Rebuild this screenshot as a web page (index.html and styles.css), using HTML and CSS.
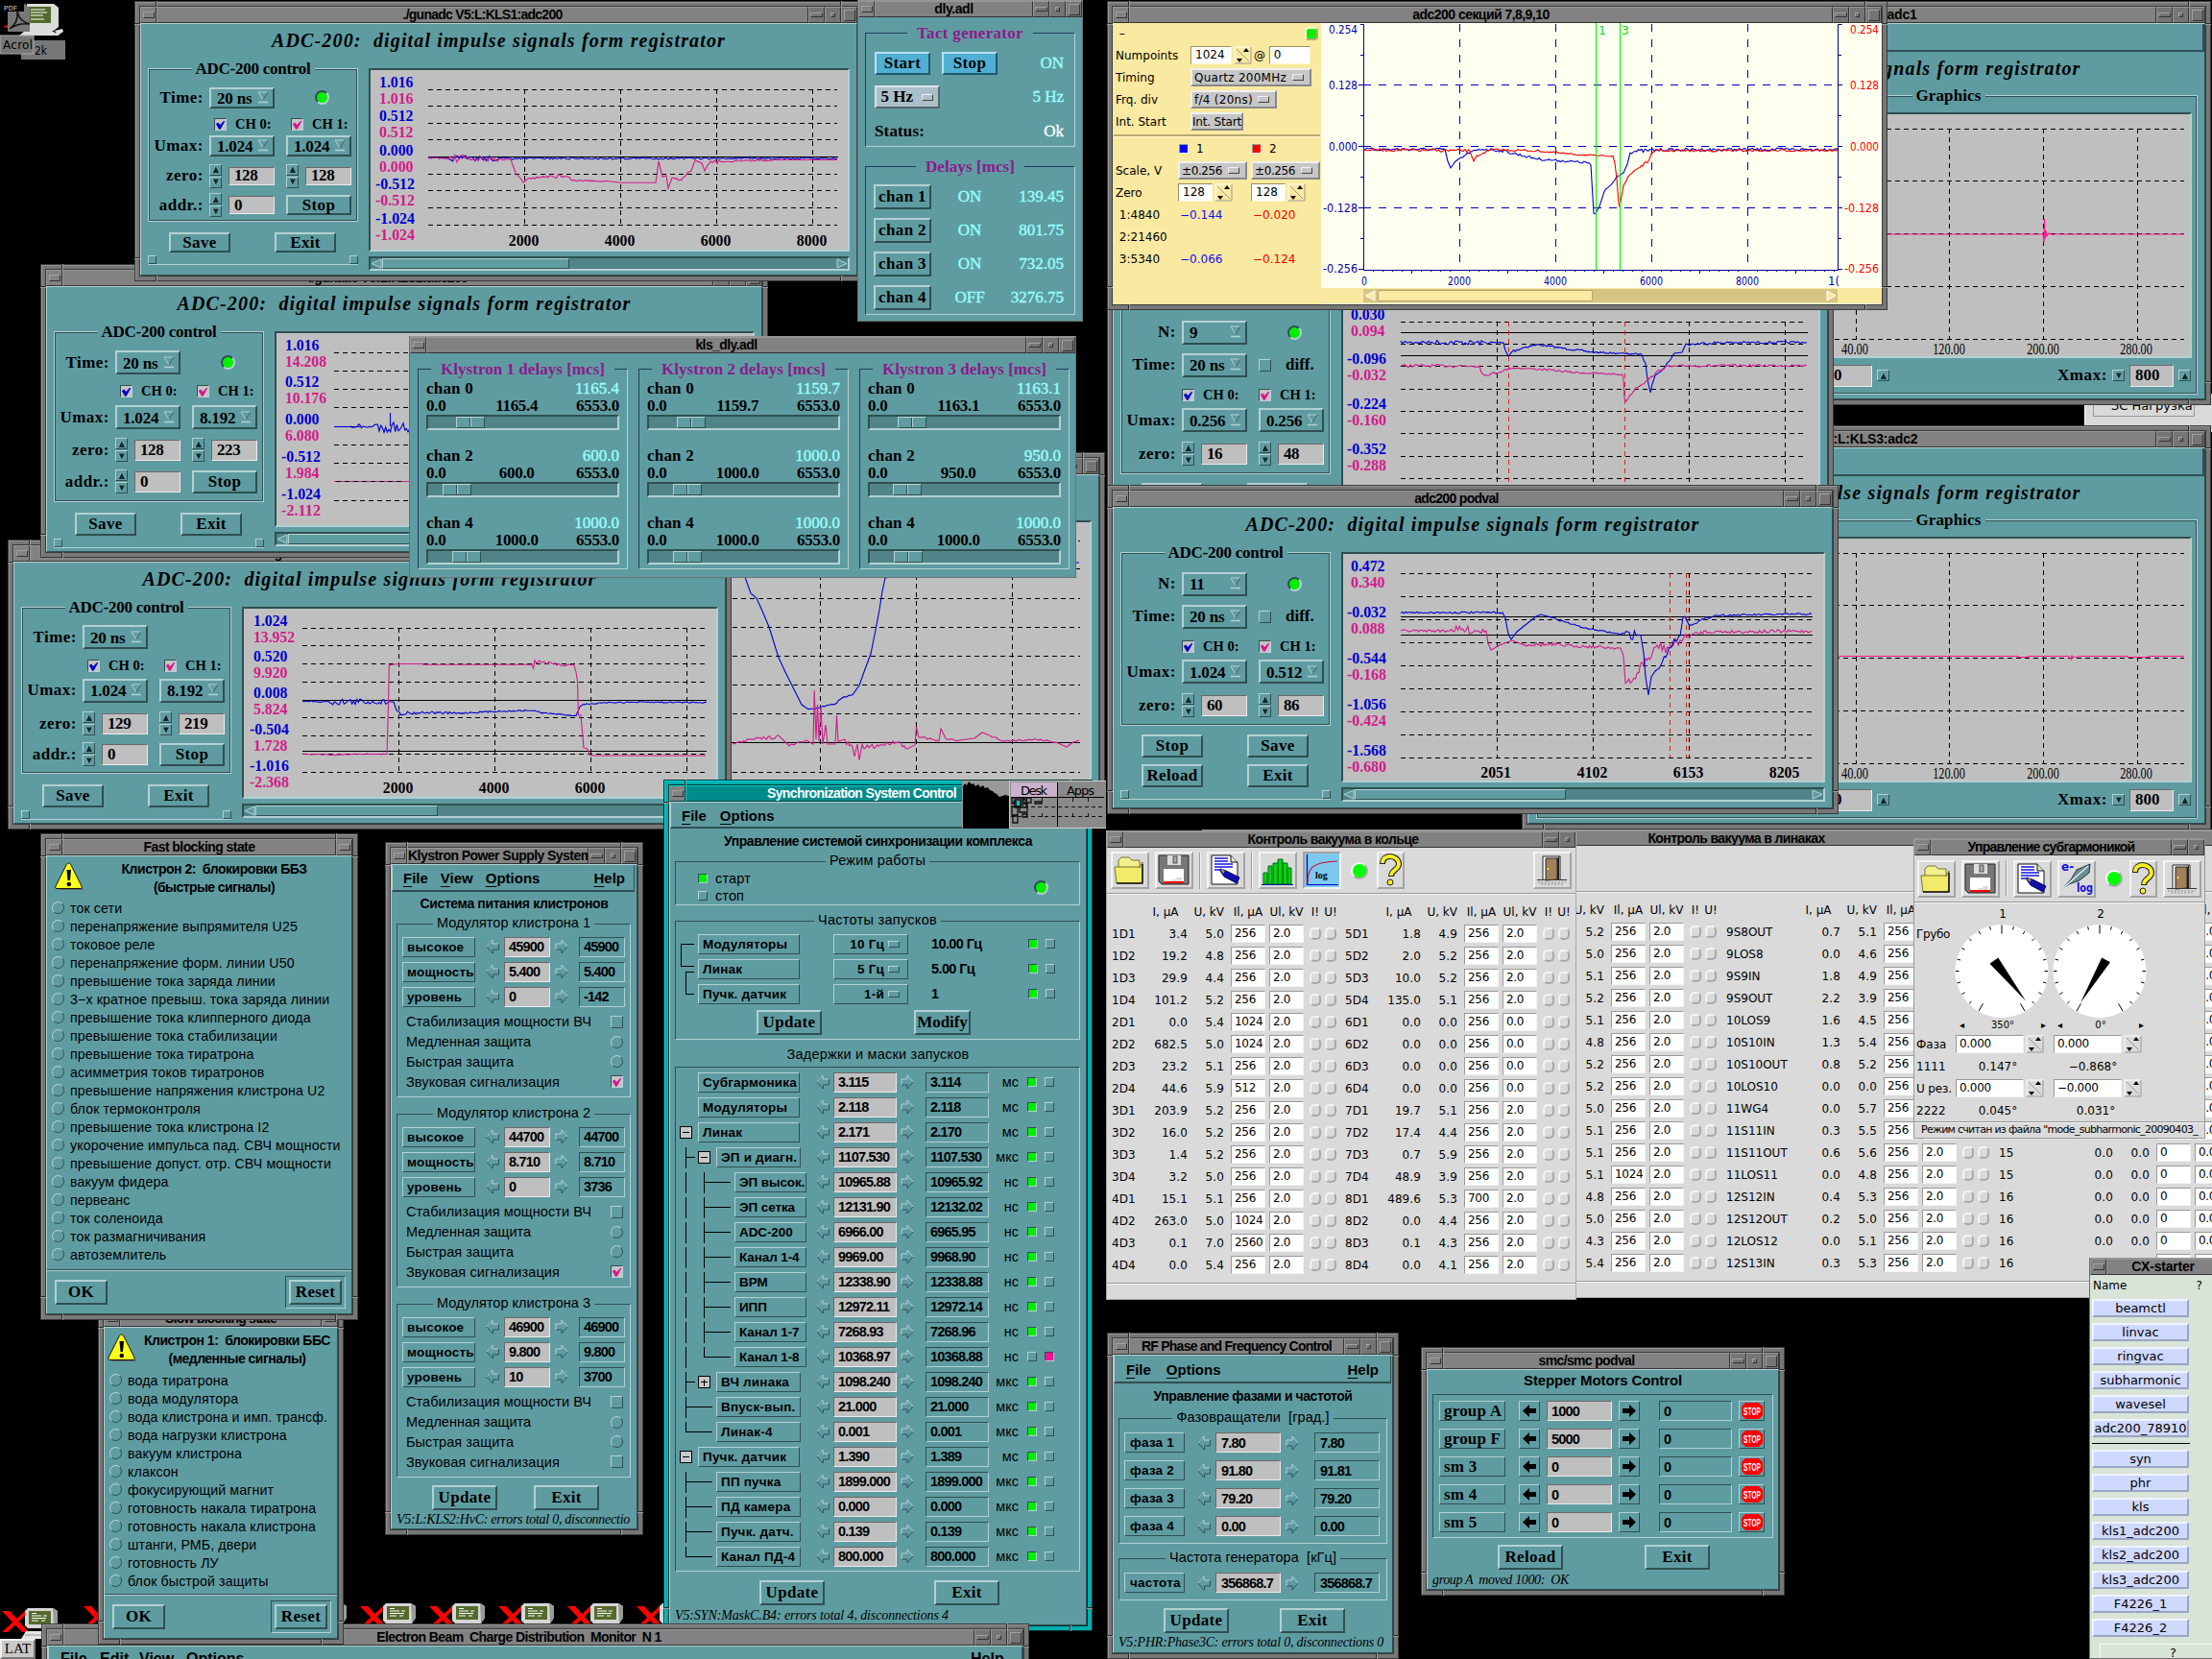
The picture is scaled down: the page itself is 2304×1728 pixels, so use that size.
FILE: index.html
```html
<!DOCTYPE html>
<html lang="ru">
<head>
<meta charset="utf-8">
<title>Control desktop</title>
<link rel="stylesheet" href="styles.css">
</head>
<body>
<svg class="defs" aria-hidden="true">
  <symbol id="i-folder" viewBox="0 0 40 40"><path d="M8 17V9l3-3h8l3 3h8v8" fill="#f2f08c" stroke="#77752a"/><path d="M4 16h25l1 1 3-6v20l-3 2H6z" fill="#f0ec6a" stroke="#77752a"/><path d="M6 33h27V13" fill="none" stroke="#111" stroke-width="1.5"/></symbol>
  <symbol id="i-floppy" viewBox="0 0 40 40"><path d="M4 4h31v30H7l-3-3z" fill="#777" stroke="#222"/><rect x="13" y="4" width="14" height="10" fill="#ddd"/><rect x="19" y="5" width="4" height="7" fill="#aaa" stroke="#333" stroke-width=".8"/><rect x="9" y="18" width="21" height="13" fill="#fff"/><rect x="9" y="31" width="21" height="2" fill="#f00"/><path d="M22 28h6M17 30h11" stroke="#bbb"/></symbol>
  <symbol id="i-doc" viewBox="0 0 40 40"><path d="M5 4h20l7 7v23H5z" fill="#fff" stroke="#111"/><path d="M25 4v7h7" fill="#ddd" stroke="#111"/><path d="M8 7h14M8 10h14M8 13h19M8 16h19M8 19h8" stroke="#1414e0" stroke-width="1.4"/><path d="M14 18l6 2 14 7-3 6-13-7-4-6z" fill="#1010a8" stroke="#000060"/><path d="M14 18l5 2-2 3z" fill="#a99550"/></symbol>
  <symbol id="i-bars" viewBox="0 0 40 40"><path d="M5 34V22h4v12zM10 34V15h4v19zM15 34V12h5v22zM20 34V8h5v26zM25 34V12h5v22zM30 34V17h4v17z" fill="#00d800" stroke="#063" stroke-width="1"/><path d="M3 34.5h33" stroke="#002090"/></symbol>
  <symbol id="i-log" viewBox="0 0 40 40"><path d="M4.500 3v31.500h32" fill="none" stroke="#0000c8" stroke-width="1.200"/><path d="M5 33c0-16 4-22 31-23" fill="none" stroke="#d01030" stroke-width="1.200"/><text x="13" y="28" class="logtxt">log</text></symbol>
  <symbol id="i-help" viewBox="0 0 29 40"><path d="M6 13c0-6 4-8 8-8s9 3 9 8c0 6-8 6-8 13" fill="none" stroke="#222" stroke-width="6"/><path d="M6 12c0-5 4-7 8-7s9 3 9 8c0 6-8 6-8 12" fill="none" stroke="#f6f022" stroke-width="3.800"/><circle cx="14" cy="32" r="3" fill="#f6f022" stroke="#222"/></symbol>
  <symbol id="i-door" viewBox="0 0 40 40"><path d="M10 29V5h18v24" fill="#fff" stroke="#222"/><path d="M13 30V7h12v22z" fill="#a1815b" stroke="#222"/><path d="M25 7l2-2v25h-2z" fill="#222"/><circle cx="15.500" cy="18" r="1" fill="#ff0"/><path d="M4 29.500h31" stroke="#333"/><path d="M5 32h29M8 34h24" stroke="#888" stroke-dasharray="2 1.500"/></symbol>
  <symbol id="i-elog" viewBox="0 0 40 40"><path d="M5 30L14 20 20 10 34 4 33 13 23 21 12 25z" fill="#6d8f8f" stroke="#234"/><path d="M5 30L32 6" stroke="#def" stroke-width="1.300"/><text x="4" y="11" class="eltxt">e-</text><text x="20" y="33" class="eltxt" textLength="17" lengthAdjust="spacingAndGlyphs">log</text></symbol>
  <symbol id="i-left" viewBox="0 0 14 16"><path d="M7 1L1 8l6 7" fill="none" stroke="#2f5557"/><path d="M1 8l6-7v4h6" fill="none" stroke="#b3d1d3"/><path d="M13.500 5v6H7.500v4" fill="none" stroke="#2f5557"/></symbol>
  <symbol id="i-right" viewBox="0 0 14 16"><path d="M13 8l-6 7v-4H1" fill="none" stroke="#2f5557"/><path d="M1 11V5h6V1l6 7" fill="none" stroke="#b3d1d3"/></symbol>
  <symbol id="i-tick" viewBox="0 0 13 13"><path d="M1 6l3-2 2 3 5-5 1 1-5 9-2 1z" fill="currentColor"/></symbol>
  <symbol id="i-warn" viewBox="0 0 31 30"><path d="M15.500 4L30 29H5z" fill="#5a6a6a"/><path d="M14.500 1c1 0 2 .6 2.500 2l11 22c.5 1.500 0 2.500-1 2.500H2c-1.500 0-1.500-1-1-2.500L12 3c.5-1.400 1.500-2 2.500-2z" fill="#ffff1c" stroke="#111"/><path d="M12.500 8h4.500l-1 11h-2.500z"/><circle cx="14.800" cy="23" r="2.300"/></symbol>
  <symbol id="i-stop" viewBox="0 0 22 17"><path d="M4 0h14l4 4v9l-4 4H4l-4-4V4z" fill="#f00"/><text x="2" y="12.500" textLength="18" lengthAdjust="spacingAndGlyphs" class="stoptxt">STOP</text></symbol>
  <symbol id="i-term" viewBox="0 0 60 36"><path d="M0 3l8 0L28 25H21zM24 3l5 0L6 25H0z" fill="#f00"/><path d="M27 0h26l5 3v12l-4 6H27l-3-3V3z" fill="#d5d5d5"/><path d="M53 0l5 3v12l-4 6z" fill="#999"/><rect x="28" y="3" width="23" height="14" fill="#54692c"/><path d="M31 5.500h5M31 8h10M43 8h4M31 10.500h15M31 13h7M41 13h4" stroke="#fff"/><path d="M25 24h28l6 8H20z" fill="#e4e4e4"/><path d="M24 28h30" stroke="#999"/></symbol>
</svg>
<main id="desktop" class="desktop"></main>
<script src="app.js"></script>
</body>
</html>
```
FILE: styles.css
```css
:root {
  --teal: #5f9ca2;
  --lt: #b3d1d3;
  --dk: #2f4f51;
  --trough: #518488;
  --gray: #bfbfbf;
  --serif: "Liberation Serif", serif;
  --sans: "Liberation Sans", sans-serif;
  --lucida: "DejaVu Sans", sans-serif;
}
* { box-sizing: border-box; }
body { margin: 0; background: #000; }
.defs { display: block; width: 0; height: 0; }
.desktop { position: relative; width: 2304px; height: 1728px; overflow: hidden; background: #000; color: #000; }
.t, .win { white-space: nowrap; }
.t { display: inline-block; white-space: pre; }

/* window frames */
.win { position: absolute; display: flex; flex-direction: column; font: bold 17px var(--serif); }
.framed { padding: 6px; background: #6e6e6e; box-shadow: inset 0 0 0 1px #3a3a3a, inset 2px 2px 0 #949494, inset 0 0 0 5px #777, inset 0 0 0 6px #3a3a3a; }
.framed::after { content: ""; position: absolute; inset: 0; pointer-events: none;
  --n: linear-gradient(90deg, #2c2c2c 50%, #9a9a9a 50%);
  --m: linear-gradient(#2c2c2c 50%, #9a9a9a 50%);
  background: var(--n) 22px 0/2px 6px no-repeat, var(--n) calc(100% - 22px) 0/2px 6px no-repeat, var(--n) 22px 100%/2px 6px no-repeat, var(--n) calc(100% - 22px) 100%/2px 6px no-repeat, var(--m) 0 23px/6px 2px no-repeat, var(--m) 100% 23px/6px 2px no-repeat, var(--m) 0 calc(100% - 23px)/6px 2px no-repeat, var(--m) 100% calc(100% - 23px)/6px 2px no-repeat; }
.bar { display: flex; height: 17px; flex: none; background: #333; }
.bar > * { border: 1px solid; border-color: #989898 #333 #333 #989898; background: #828282; }
.bar h2 { flex: 1; margin: 0; overflow: hidden; text-align: center; font: bold 14px/14px var(--sans); letter-spacing: -.2px; min-width: 0; }
.bar i { width: 17px; display: flex; align-items: center; justify-content: center; background: #757575; }
.bar i.menu { background: #828282; }
.bar i::before { content: ""; border: 1px solid; border-color: #a0a0a0 #333 #333 #a0a0a0; }
.bar i.menu::before { width: 10px; height: 5px; }
.bar i.min::before { width: 11px; height: 3px; }
.bar i.dot::before { width: 3px; height: 3px; }
.bar i.max::before { width: 10px; height: 10px; }
.active { background: #00a8a8; box-shadow: inset 0 0 0 1px #033, inset 2px 2px 0 #00d8d8, inset 0 0 0 5px #00aeae, inset 0 0 0 6px #033; }
.active .bar > * { background: #008b8b; border-color: #00d0d0 #044 #044 #00d0d0; color: #fff; }
.body { flex: 1; min-height: 0; background: var(--teal); border: 1px solid; border-color: var(--lt) var(--dk) var(--dk) var(--lt); overflow: hidden; display: flex; flex-direction: column; }
.flat .body { border: 0; }
.flat .bar { height: 18px; border-top: 1px solid #949494; }
.flat { border: 1px solid #6e6e6e; border-top: 0; }

/* shared widgets */
.group { display: flex; flex-direction: column; border: 1px solid; border-color: var(--dk) var(--lt) var(--lt) var(--dk); flex: none; }
.etched { border-color: var(--lt); box-shadow: inset 1px 1px 0 var(--dk), inset -1px -1px 0 var(--dk); }
.legend { align-self: center; height: 20px; line-height: 20px; margin: -10px 0 0; padding: 0 4px; background: var(--teal); flex: none; }
.btn { display: flex; align-items: center; justify-content: center; flex: none; border: 2px solid; border-color: var(--lt) var(--dk) var(--dk) var(--lt); background: var(--teal); letter-spacing: .35px; }
.inp { display: flex; align-items: center; flex: none; background: var(--gray); border: 1px solid; border-color: #6f6666 #f0eaea #f0eaea #6f6666; overflow: hidden; }
.out { display: flex; align-items: center; flex: none; border: 1px solid; border-color: var(--dk) var(--lt) var(--lt) var(--dk); }
.tag { display: flex; align-items: center; flex: none; border: 1px solid; border-color: var(--lt) var(--dk) var(--dk) var(--lt); }
.led { width: 15px; height: 15px; border-radius: 50%; background: #00f000; border: 2px solid; border-color: var(--dk) var(--lt) var(--lt) var(--dk); flex: none; }
.chk { width: 13px; height: 13px; flex: none; border: 1px solid; border-color: var(--dk) var(--lt) var(--lt) var(--dk); background: #c8c4c8; color: #0000c8; display: block; }
.chk svg { display: block; width: 11px; height: 11px; }
.chk.off { background: none; border-color: var(--lt) var(--dk) var(--dk) var(--lt); }
.chk.pink { color: #d01c8b; }
.ring { width: 13px; height: 13px; flex: none; border-radius: 50%; border: 1px solid; border-color: var(--lt) var(--dk) var(--dk) var(--lt); }
.sq { width: 10px; height: 10px; flex: none; border: 1px solid; border-color: var(--dk) var(--lt) var(--lt) var(--dk); background: #00ee00; }
.sq.off { background: none; border-color: var(--lt) var(--dk) var(--dk) var(--lt); }
.sq.hot { background: #f01490; border-color: var(--dk) var(--lt) var(--lt) var(--dk); }
.ar { width: 14px; height: 16px; flex: none; display: block; }
.menubar { display: flex; flex: none; align-items: center; font: bold 15px var(--sans); border: 1px solid; border-color: transparent var(--dk) var(--dk) var(--lt); border-bottom-width: 2px; }
.menubar u { text-underline-offset: 3px; text-decoration-thickness: 1px; }
.menubar .end { margin-left: auto; }
.status { font: italic 14px/20px var(--serif); flex: none; white-space: nowrap; overflow: hidden; }
.head { text-align: center; font: bold 14px var(--sans); flex: none; }
.sans { font: 14.500px var(--sans); }
.cond { font: bold 14.500px var(--sans); letter-spacing: -.8px; }
.nub { width: 12px; height: 7px; border: 1px solid; border-color: #eef #444 #444 #eef; }

/* ADC windows */
.adc .body { padding: 0 7px 0 7px; }
.adc h1 { margin: 0; height: 46px; font: italic bold 20px/35px var(--serif); text-align: center; flex: none; }
.adc-main { display: grid; grid-template-columns: 219px 1fr; column-gap: 11px; }
.ctl { height: var(--box); }
.ctl-grid { display: grid; grid-template-columns: 57px 68px 68px; column-gap: 0; align-items: center; }
.ctl-grid > .l { text-align: right; letter-spacing: .5px; }
.ctl-grid > .c1 { margin-left: 6px; width: 68px; }
.ctl-grid > .c2 { margin-left: 18px; width: 68px; }
.sel { display: flex; align-items: center; height: var(--h); border: 2px solid; border-color: var(--lt) var(--dk) var(--dk) var(--lt); padding: 2px 4px 0 6px; letter-spacing: -.2px; }
.sel svg { width: 12px; height: 15px; margin-left: auto; margin-top: -3px; }
.spin { display: flex; justify-content: space-between; align-items: center; }
.spin .inp { width: 48px; height: calc(var(--h) - 3px); padding-left: 5px; letter-spacing: -.4px; }
.ud { display: flex; flex-direction: column; gap: 1px; }
.ab { width: 13px; height: 12px; border: 1px solid; border-color: var(--lt) var(--dk) var(--dk) var(--lt); display: flex; align-items: center; justify-content: center; flex: none; }
.ab svg { width: 7px; height: 7px; display: block; }
.ck { display: flex; align-items: center; gap: 9px; padding-left: var(--ci, 5px); font-size: 14.500px; }
.ck.lamped { padding-left: 30px; }
.ck.diff { padding-left: 0; gap: 15px; font-size: 17px; }
.ctl-grid .btn { height: calc(var(--h) - 1px); }
.acts { display: grid; grid-template-columns: 64px 64px; column-gap: 46px; row-gap: 7px; padding-left: 22px; margin-top: var(--ag, 11px); }
.acts .btn { height: calc(var(--h) - 1px); }
.sash { margin-top: 2px; display: flex; justify-content: space-between; align-items: flex-end; height: 11px; border-bottom: 1px solid var(--lt); }
.sash i { width: 9px; height: 9px; border: 1px solid; border-color: var(--lt) var(--dk) var(--dk) var(--lt); }
.panel { border: 2px solid; border-color: var(--dk) var(--lt) var(--lt) var(--dk); background: var(--gray); overflow: hidden; }
.plot { display: block; }
.sb { height: 15px; margin-top: 5px; display: flex; background: var(--trough); border: 2px solid; border-color: var(--dk) var(--lt) var(--lt) var(--dk); }
.sb svg { width: 12px; height: 11px; flex: none; }
.sb b { border: 1px solid; border-color: var(--lt) var(--dk) var(--dk) var(--lt); background: var(--teal); }
.sb svg:last-child { margin-left: auto; }

/* charts */
.g { stroke: #000; stroke-width: 1; stroke-dasharray: 5 4; shape-rendering: crispEdges; }
.s { stroke: #000; shape-rendering: crispEdges; }
.r { stroke: #e02020; stroke-dasharray: 5 4; shape-rendering: crispEdges; }
.tb, .tp, .th, .td { fill: none; stroke-width: 1.100; }
.tb { stroke: #0000cd; } .tp { stroke: #d01c8b; } .th { stroke: #ff1493; } .td { stroke: #f00000; }
.lb, .lp, .lk { font: bold 17px var(--serif); }
.lb { fill: #0000cd; } .lp { fill: #d01c8b; }
.lt { font: 16px var(--serif); }

.win.a { left: 140px; top: 1px; width: 759px; height: 292px; --h: 22px; --box: 160px; }
.a .ctl-grid { grid-template-rows: 39px 16px 30px 32px 29px; }
.win.b { left: 42px; top: 275px; width: 758px; height: 306px; --h: 25px; --box: 178px; }
.b .ctl-grid { grid-template-rows: 43px 17px 37px 31px 35px; }
.win.c { left: 8px; top: 562px; width: 754px; height: 302px; --h: 25px; --box: 174px; }
.c .ctl-grid { grid-template-rows: 41px 19px 32px 37px 27px; }
.win.h, .win.i { --h: 25px; --box: 181px; --ci: 0px; --ag: 9px; }
.h .ctl-grid, .i .ctl-grid { grid-template-rows: 44px 24px 39px 13px 57px; }
.win.h { left: 1153px; top: 243px; width: 757px; height: 344px; }
.win.i { left: 1153px; top: 505px; width: 762px; height: 343px; }
.win.d { left: 394px; top: 471px; width: 757px; height: 392px; }
.d .panel { margin: 47px 7px 0; }

/* graphics windows on the right */
.gw .strip { height: 29px; border-bottom: 2px solid var(--dk); border-right: 2px solid var(--dk); margin-bottom: 1px; flex: none; }
.gw h1 { margin: 0; font: italic bold 20px/33px var(--serif); text-align: center; padding-right: 26px; height: 44px; flex: none; }
.gw .group { margin: 0 7px 0 8px; height: 312px; padding: 0 5px 0 7px; }
.gw .legend { margin-left: 168px; }
.gw .panel { margin-top: 7px; }
.gw .foot { display: flex; align-items: center; height: 36px; gap: 5px; padding-right: 1px; }
.gw .foot .inp { height: 23px; width: 46px; padding-left: 5px; }
.gw .foot .xm { margin-left: 170px; letter-spacing: .6px; }
.gw .foot .n0 { margin-left: auto; }
.win.j { left: 1585px; top: 1px; width: 718px; height: 421px; }
.win.k { left: 1585px; top: 443px; width: 718px; height: 421px; }
.load { position: absolute; left: 2171px; top: 410px; width: 140px; height: 40px; background: #d9d9d9; padding: 7px 0 0 8px; border-left: 1px solid #fff; }
.load div { width: 106px; height: 17px; border: 1px solid #999; font: 13px/9px var(--lucida); padding-left: 18px; white-space: nowrap; }

/* delays panels */
.win.e { left: 426px; top: 350px; width: 695px; height: 252px; }
.e .body { flex-direction: row; gap: 11px; padding: 16px 7px 8px 8px; }
.e .group, .f .group { border-color: #1d3c5c var(--lt) var(--lt) #1d3c5c; }
.e .group { width: 219px; padding: 0 8px; }
.e .legend, .f .legend { color: #8b1a8b; padding: 0 10px; font-size: 17px; }
.cyan { color: #98ffff; font-weight: normal; -webkit-text-stroke: .35px #98ffff; letter-spacing: 0; }
.e .dl { height: 70px; letter-spacing: -.3px; flex: none; }
.e .dl p { margin: 0; height: 18px; line-height: 21px; display: flex; justify-content: space-between; }
.e .dl p:first-child { letter-spacing: .2px; height: 17px; line-height: 20px; }
.e .dl p span:nth-child(2) { padding-left: 12px; }
.slide { height: 16px; margin-top: 2px; border: 2px solid; border-color: var(--dk) var(--lt) var(--lt) var(--dk); background: var(--trough); }
.slide b { display: block; width: 30px; height: 12px; border: 1px solid; border-color: var(--lt) var(--dk) var(--dk) var(--lt); background: linear-gradient(90deg, transparent 13px, var(--dk) 13px 14px, var(--lt) 14px 15px, transparent 15px) var(--teal); }
.win.f { left: 893px; top: 0; width: 235px; height: 335px; }
.f .body { padding: 16px 7px 7px; gap: 20px; }
.f .group { padding: 0 9px; }
.f .g1 { height: 119px; } .f .g2 { height: 155px; }
.f .rw { display: flex; align-items: center; height: 35px; padding: 0 2px 0 0; flex: none; position: relative; top: 3px; }
.f .g1 .rw { height: 35.500px; }
.f .btn.sky { width: 58px; height: 24px; background: #4fb0d4; border-color: #b8e0f0 #205a70 #205a70 #b8e0f0; margin-right: 12px; }
.f .hz { width: 68px; height: 24px; border: 2px solid; border-color: #d8e4e8 #55666b #55666b #d8e4e8; background: #aabfc8; display: flex; align-items: center; justify-content: space-around; }
.f .right { margin-left: auto; }
.f .cb { width: 60px; height: 26px; margin-left: -1px; }
.f .st { width: 64px; text-align: center; margin-left: 8px; }
.white { color: #fff; font-weight: normal; -webkit-text-stroke: .35px #fff; }

/* yellow scope window */
.win.y { left: 1153px; top: 1px; width: 813px; height: 322px; }
.y .body { background: #fae9a0; flex-direction: row; border: 0; font: 12px var(--lucida); }
.yl { width: 217px; flex: none; }
.yl .rw { height: 23px; display: flex; align-items: center; padding-left: 3px; }
.yl .first { justify-content: space-between; padding-right: 3px; height: 22px; }
.yl .led { width: 14px; height: 14px; border-radius: 4px; border-color: #fff6cf #b5a870 #b5a870 #fff6cf; }
.yl .nm { width: 78px; flex: none; }
.yl .k2 .nm { width: 65px; }
.yl .vl { width: 76px; flex: none; }
.yl .k2 .vl { display: flex; align-items: center; }
.yl .sq { margin: 0 8px 0 1px; border-color: #999 #fff #fff #999; }
.yl .sq.bl { background: #00f; } .yl .sq.rd { background: #f00; }
.yl .blue { color: #1010f0; padding-left: 2px; } .yl .red { color: #f00000; padding-left: 2px; }
.fi { background: #fff; border: 1px solid; border-color: #9a8f60 #fff6cf #fff6cf #9a8f60; height: 19px; line-height: 17px; padding-left: 4px; flex: none; }
.fi.w43 { width: 43px; } .fi.w36 { width: 36px; }
.op { background: #c6c6c6; border: 2px solid; border-color: #f0f0f0 #888 #888 #f0f0f0; height: 19px; display: flex; align-items: center; justify-content: space-between; padding: 0 6px 0 2px; flex: none; }
.op.o1 { width: 126px; } .op.o2 { width: 90px; } .op.o3 { width: 55px; padding: 0; } .op.o4 { width: 72px; margin-right: 4px; }
.sp { width: 19px; height: 19px; flex: none; margin: 0 2px; display: block; }
.yr { flex: 1; background: #fffff0; }
.yhr { height: 3px; background: #b5a870; border-bottom: 1px solid #fff6cf; margin: 2px 1px 0; }
.cy, .cr, .cg { font: 12px var(--lucida); }
.cy { fill: #0000a8; } .cr { fill: #f00; } .cg { fill: #0d0; }

/* klystron interlock lists */
.win.m { left: 42px; top: 868px; width: 331px; height: 507px; }
.win.n { left: 102px; top: 1359px; width: 256px; height: 354px; }
.blk .top { display: flex; height: 45px; flex: none; }
.blk .top svg { width: 31px; height: 30px; margin: 6px 0 0 8px; flex: none; }
.blk .top p { margin: 4px 0 0; flex: 1; text-align: center; font: bold 14px/18.500px var(--sans); }
.m .top p { margin-left: -8px; }
.m .top { height: 44px; }
.n .top svg { margin-left: 3px; }
.blk ul { margin: 0; padding: 0; list-style: none; }
.blk li { height: 19.020px; display: flex; align-items: center; gap: 6px; padding-left: 5px; font: 14.200px var(--sans); letter-spacing: .12px; }
.blk .bot { margin-top: auto; display: flex; justify-content: space-between; align-items: center; height: 46px; border-top: 1px solid var(--dk); box-shadow: inset 0 1px 0 var(--lt); padding: 0 6px 0 8px; }
.blk .btn { width: 55px; height: 26px; }
.rs { border: 1px solid; border-color: var(--dk) var(--lt) var(--lt) var(--dk); padding: 3px; }

/* klystron power supply */
.win.o { left: 401px; top: 877px; width: 269px; height: 722px; }
.o .menubar { height: 28px; gap: 13px; padding: 0 9px 0 11px; margin-right: 2px; }
.o .head { height: 33px; line-height: 24px; }
.o .group { margin: 0 6px 17px 5px; height: 181px; padding: 0 5px 0 5px; }
.o .gap { height: 3px; flex: none; }
.o .kr { height: 26px; display: grid; grid-template-columns: 76px 11px 14px 5px 48px 5px 14px 11px 48px; align-items: center; flex: none; }
.kr > * { height: 21px; }
.kr .ar { height: 16px; }
.tag, .cond { padding-left: 4px; }
.o .tag, .w .tag, .p .tag { font: bold 13.500px var(--sans); letter-spacing: .2px; }
.o .line { height: 20.800px; display: flex; justify-content: space-between; align-items: center; padding: 0 2px 0 4px; flex: none; }
.pair { display: flex; flex: none; }
.pair .btn { width: 68px; height: 26px; }
.o .pair { gap: 38px; padding-left: 42px; margin-top: -9px; }
.o .status { padding-left: 5px; margin-right: 7px; }

/* synchronization */
.win.p { left: 691px; top: 812px; width: 447px; height: 887px; }
.p .menubar { height: 27px; gap: 14px; padding: 0 11px; margin-right: 3px; }
.p .head { height: 26px; line-height: 26px; }
.p .group { margin: 0 6px 0 5px; width: 422px; }
.p .g1 { height: 46px; margin-top: 8px; }
.p .radio { display: flex; padding: 0 32px 0 23px; align-items: center; justify-content: space-between; margin-top: -2px; }
.p .radio p { margin: 0; height: 18px; display: flex; align-items: center; gap: 8px; }
.p .g2 { height: 124px; margin-top: 16px; }
.p .g2 .inner { display: grid; grid-template-columns: 23px 1fr; }
.p .fr { height: 26px; display: grid; grid-template-columns: 106px 35px 78px 24px 101px 18px 10px; align-items: center; }
.p .fr > .tag { height: 21px; }
.p .fr .fo { justify-content: flex-end; gap: 4px; padding-right: 8px; }
.p .fr .cond { padding: 0; letter-spacing: -.6px; }
.nub.tl { border-color: var(--lt) var(--dk) var(--dk) var(--lt); }
.p .g2 .pair { padding-left: 84px; gap: 96px; margin-top: 4px; }
.p .g2 .btn + .btn { width: 59px; letter-spacing: -.1px; }
.p .mid { height: 28px; line-height: 30px; text-align: center; flex: none; }
.p .g3 { height: 526px; display: grid; grid-template-columns: 23px 1fr; padding-top: 2px; align-content: start; }
.tree { overflow: visible; display: block; }
.tree path { stroke: #000; fill: none; shape-rendering: crispEdges; }
.tree rect { fill: #c8c8c8; stroke: #000; shape-rendering: crispEdges; }
.p .sr { height: 26px; display: grid; grid-template-columns: 123px 14px 4px 66px 4px 14px 12px 66px 31px 9px 18px 10px; align-items: center; }
.sr > .inp, .sr > .out, .sr > .tag { height: 21px; }
.sr .un { text-align: right; }
.sr .l0 { width: 106px; } .sr .l1 { width: 88px; margin-left: 19px; } .sr .l2 { width: 75px; margin-left: 38px; letter-spacing: -.1px; }
.p .ft { gap: 114px; padding-left: 93px; margin-top: 9px; }
.p .status { padding-left: 5px; margin-top: 1px; }

/* root menu pager */
.pg { position: absolute; left: 1002px; top: 813px; width: 150px; height: 50px; display: block; }
.pgt { font: 13px var(--lucida); }

/* vacuum tables */
.vac { background: #dadada; font: 12px var(--lucida); }
.vac .body { background: #dadada; }
.win.s1 { left: 1152px; top: 865px; width: 490px; height: 489px; border-color: #aaa; }
.win.t1 { left: 1252px; top: 864px; width: 1090px; height: 488px; border-color: #aaa; }
.t1 .bar { height: 17px; }
.t1 .bar h2 { padding-left: 6px; }
.tools { height: 48px; border-bottom: 1px solid #999; box-shadow: 0 1px 0 #f4f4f4; display: flex; align-items: center; flex: none; padding: 0 4px; }
.tl1 { width: 40px; height: 39px; border: 2px solid; border-color: #f4f4f4 #a4a4a4 #a4a4a4 #f4f4f4; margin-right: 6px; flex: none; display: flex; }
.tl1 svg { width: 40px; height: 40px; margin: -2px; flex: none; }
.tl1.q { width: 29px; } .tl1.q svg { width: 29px; }
.tl1.on { background: #7cc8f0; border-color: #a4a4a4 #f4f4f4 #f4f4f4 #a4a4a4; }
.tools hr { width: 2px; height: 38px; margin: 0 6px 0 0; border: 0; border-left: 1px solid #999; background: #f4f4f4; flex: none; }
.tools .led { width: 18px; height: 18px; margin: 0 9px 0 4px; border-color: #f4f4f4 #aaa #aaa #f4f4f4; background: #0f0; }
.tools .end { margin-left: auto; margin-right: 0; }
.vt { display: flex; height: 406px; padding-top: 7px; border-bottom: 1px solid #999; box-shadow: 0 1px 0 #f4f4f4; flex: none; }
.vb { flex: none; }
.vr { height: 23.020px; display: grid; grid-template-columns: var(--nm) 53px 38px 7px 36px 4px 36px 6px 12px 4px 12px; align-items: center; }
.vr > .rt { text-align: right; letter-spacing: .1px; }
.vr > .wh { height: 19px; }
.vr.hd { height: 23px; white-space: nowrap; }
.vr.hd span { margin: 0 -10px; text-align: center; }
.vr.hd span:nth-child(2) { margin-left: -3px; }
.vr.hd span:nth-child(3) { margin: 0; text-align: right; }
.wh { background: #fff; border: 1px solid; border-color: #999 #f4f4f4 #f4f4f4 #999; line-height: 17px; padding-left: 3px; letter-spacing: -.3px; }
.lamp { width: 12px; height: 13px; border: 2px solid; border-color: #f4f4f4 #a8a8a8 #a8a8a8 #f4f4f4; border-radius: 5px; }
.s1 .vb { --nm: 26px; width: 243px; padding-left: 3px; }
.s1 .vt { padding-left: 2px; }
.t1 .vb { --nm: 66px; width: 284px; padding-left: 3px; }
.t1 .vt { padding-left: 258px; }

.win.u { left: 1993px; top: 873px; width: 304px; height: 313px; border: 1px solid #999; border-top: 0; }
.u .tools { height: 49px; padding: 0 3px; }
.u .tools .led { margin: 0 7px 0 4px; }
.u .ug { display: grid; grid-template-columns: 41px 102px 102px; height: 228px; grid-template-rows: 23px 95px 18px 23px 23px 23px 23px; padding-left: 2px; align-items: center; flex: none; }
.u .ug > .c { text-align: center; padding-right: 4px; }
.u .ug > .c.v1 { padding-right: 14px; } .u .ug > .c.v2 { padding-right: 20px; }
.u .dial { align-self: start; display: block; width: 100px; height: 102px; margin: -1px 0 -8px -2px; }
.u .top { align-self: start; margin-top: 3px; }
.u .sp2 { display: flex; align-items: center; }
.u .sp2 .wh { width: 71px; height: 19px; }
.u .da { display: flex; justify-content: space-between; padding: 0 8px 0 4px; font-size: 10px; }
.u .ust { border-top: 1px solid #999; box-shadow: inset 0 1px 0 #f4f4f4; font: 11px/16px var(--lucida); padding-left: 7px; flex: 1; }

.win.v { left: 2176px; top: 1310px; width: 160px; height: 418px; font: 13px var(--lucida); }
.v .body { background: #d9e4d9; padding-left: 2px; }
.v .bar h2 { padding-right: 23px; }
.v .nm { height: 25px; line-height: 22px; display: flex; gap: 72px; padding-left: 1px; flex: none; font-size: 12px; }
.v .cxb { width: 101px; height: 19px; margin: 0 0 6.050px; border: 2px solid; border-color: #f0f4ff #9aa4c4 #9aa4c4 #f0f4ff; background: #cfd8ff; line-height: 15px; text-align: center; flex: none; }
.v .ln { width: 102px; height: 1px; background: #000; margin: 0 0 6px; flex: none; }
.v .qb { margin: 1px 0 0 8px; border: 1px solid #f4fff4; height: 21px; padding-left: 72px; line-height: 18px; }

/* RF phase */
.win.w { left: 1153px; top: 1388px; width: 304px; height: 340px; }
.w .menubar { height: 29px; gap: 16px; padding: 0 12px 0 12px; margin-right: 1px; }
.w .head { height: 36px; line-height: 26px; }
.w .group { margin: 0 5px 0 5px; padding: 0 5px; }
.w .g1 { height: 131px; } .w .g2 { height: 44px; margin-top: 15px; }
.w .wr { height: 29px; display: grid; grid-template-columns: 63px 13px 14px 5px 68px 5px 14px 16px 68px; align-items: center; flex: none; }
.wr > * { height: 21px; }
.wr .ar { height: 16px; }
.wr .cond, .wr .tag { padding-left: 5px; }
.w .pair { gap: 53px; padding-left: 52px; margin-top: 8px; }
.w .status { padding-left: 5px; }

/* stepper motors */
.win.x { left: 1480px; top: 1403px; width: 379px; height: 259px; }
.x .head { height: 25px; line-height: 22px; font-size: 15px; }
.x .group { height: 150px; margin: 0 5px; padding: 2px 6px; }
.x .xr { height: 29px; display: grid; grid-template-columns: 69px 14px 22px 7px 68px 7px 22px 20px 76px 7px 27px; align-items: center; flex: none; }
.xr > * { height: 21px; }
.xr .tag { padding-left: 4px; letter-spacing: .2px; }
.xr .tag svg { margin: 0 auto; }
.xr .ib { padding: 0; }
.x .pair { gap: 85px; padding-left: 73px; margin-top: 7px; }
.x .status { padding-left: 5px; margin-top: 1px; }

.win.z { left: 43px; top: 1691px; width: 1029px; height: 70px; }
.z .menubar { height: 26px; font-size: 16px; gap: 0; padding: 0 12px; }
.z .menubar span { width: 41px; } .z .menubar span:nth-child(3) { width: 49px; }
.z .menubar .end { margin-left: auto; }

.ico { position: absolute; display: block; }
.lat { position: absolute; left: 0; top: 1707px; width: 37px; height: 21px; background: #c8c8c8; border: 2px solid; border-color: #eee #777 #777 #eee; font: 15px/17px var(--serif); text-align: center; }
.pdf { font: 8px "Liberation Mono", monospace; fill: #ccc; }
.icl { font: 12px var(--lucida); }
.logtxt { font: bold 10px var(--serif); }
.eltxt { font: bold 12px var(--lucida); fill: #1010e0; }
.stoptxt { font: bold 10px var(--sans); fill: #fff; }
```
FILE: app.js
```js
const desk = document.getElementById('desktop');
const use = (id, cls = '') => `<svg class="${cls}"><use href="#${id}"/></svg>`;
const T = (s, w, c = '') => `<span class="t ${c}" data-w="${w}">${s}</span>`;

/* window shell: kind is a class list, btns the right-hand title buttons */
function win(kind, title, btns, body, tw) {
  const b = btns.map(n => `<i class="${n}"></i>`).join('');
  const el = document.createElement('section');
  el.className = 'win ' + kind;
  el.innerHTML = `<header class="bar"><i class="menu"></i><h2>${tw ? T(title, tw) : title}</h2>${b}</header><div class="body">${body}</div>`;
  desk.append(el);
}
const ALL = ['min', 'dot', 'max'];

/* chart helpers; coordinates are desktop pixels */
const svg = (x, y, w, h, inner) => `<svg class="plot" width="${w}" height="${h}" viewBox="${x} ${y} ${w} ${h}">${inner}</svg>`;
const hl = (x1, x2, ys, c = 'g') => ys.map(y => `<path class="${c}" d="M${x1} ${Math.round(y) + .5}H${x2}"/>`).join('');
const vl = (y1, y2, xs, c = 'g') => xs.map(x => `<path class="${c}" d="M${Math.round(x) + .5} ${y1}V${y2}"/>`).join('');
const lab = (x, y, s, c, w, a = 'start') => `<text x="${x}" y="${y}" class="${c}" text-anchor="${a}" ${w ? `textLength="${w}" lengthAdjust="spacingAndGlyphs"` : ''}>${s}</text>`;
let seed = 7;
const rnd = () => (seed = (seed * 16807) % 2147483647) / 2147483647 - .5;
function trace(c, flat) {
  const p = flat.split(' ').map(q => q.split(',').map(Number));
  let d = '';
  for (let i = 0; i < p.length - 1; i++) {
    const [x1, y1, a = 0] = p[i], [x2, y2] = p[i + 1];
    const n = a ? Math.max(1, Math.round((x2 - x1) / 1.7)) : 1;
    for (let k = 0; k < n; k++) {
      const f = k / n;
      d += `${(x1 + (x2 - x1) * f).toFixed(1)},${(y1 + (y2 - y1) * f + (k || a ? rnd() * 2 * a : 0)).toFixed(1)} `;
    }
  }
  const l = p[p.length - 1];
  return `<polyline class="${c}" points="${d}${l[0]},${l[1]}"/>`;
}
/* stacked blue / pink scale */
function scale(x, ys, vals) {
  return vals.map((v, i) => {
    const neg = v[0] === '-', long = v.length > 5 && !neg;
    return lab(neg ? x - 4 : x, ys[i] + 5.5, v, i % 2 ? 'lp' : 'lb', neg ? 41 : long ? 43 : 35.5);
  }).join('');
}
const arrow = r => `<svg viewBox="0 0 12 11"><path d="${r ? 'M1 1L11 5.500 1 10z' : 'M11 1L1 5.500 11 10z'}" fill="#5f9ca2" stroke="#b3d1d3"/></svg>`;
const sb = w => `<div class="sb">${arrow(0)}<b style="width:${w}px"></b>${arrow(1)}</div>`;

/* ADC-200 control panel */
const dd = '<svg viewBox="0 0 12 15"><path d="M1 2h10L6 10z" fill="none" stroke="#b3d1d3"/><path d="M11 2L6 10" stroke="#2f4f51"/><path d="M1 12.500h10" stroke="#b3d1d3" stroke-width="1.500"/></svg>';
const sel = s => `<div class="sel">${s}${dd}</div>`;
const ab = u => `<span class="ab"><svg viewBox="0 0 8 8"><path d="${u ? 'M4 0L8 8H0z' : 'M0 0H8L4 8z'}" fill="#12282a"/><path d="${u ? 'M0 8L4 0' : 'M4 8L0 0H8'}" fill="none" stroke="#9cc4c6"/></svg></span>`;
const spin = s => `<div class="spin"><span class="ud">${ab(1)}${ab(0)}</span><span class="inp">${s}</span></div>`;
const chk = (pink, on = 1) => `<span class="chk ${pink ? 'pink' : ''} ${on ? '' : 'off'}">${on ? use('i-tick') : ''}</span>`;
const row = (l, a, b) => `<span class="l">${l}</span><div class="c1">${a}</div><div class="c2">${b}</div>`;
function adc(o) {
  const led = '<div class="ck lamped"><span class="led"></span></div>';
  const rows = (o.n ? row('N:', sel(o.n), led) : '')
    + row('Time:', sel('20 ns'), o.n ? `<div class="ck diff">${chk(0, 0)}diff.</div>` : o.led ? led : '')
    + row('', `<div class="ck">${chk(0)}CH 0:</div>`, `<div class="ck">${chk(1)}CH 1:</div>`)
    + row('Umax:', sel(o.u[0]), sel(o.u[1]))
    + row('zero:', spin(o.z[0]), spin(o.z[1]))
    + (o.n ? '' : row('addr.:', spin('0'), '<div class="btn">Stop</div>'));
  const acts = (o.n ? ['Stop', 'Save', 'Reload', 'Exit'] : ['Save', 'Exit']).map(s => `<div class="btn">${s}</div>`).join('');
  win('framed adc ' + o.cls, o.title, ALL,
    `<h1>${T('ADC-200:  digital impulse signals form registrator', 473)}</h1>
    <div class="adc-main"><div><div class="group etched ctl"><div class="legend">${T('ADC-200 control', 120)}</div><div class="ctl-grid">${rows}</div></div>
    <div class="acts">${acts}</div><div class="sash"><i></i><i></i></div></div>
    <div><div class="panel">${o.chart}</div>${sb(o.thumb)}</div></div>`, o.tw);
}

/* right-hand graphics windows */
function gw(cls, title, dy, tracePts) {
  const Y = v => v + dy;
  win('framed gw ' + cls, title, ALL, `<div class="strip"></div><h1>${T('ADC-200:  digital impulse signals form registrator', 473)}</h1>
  <div class="group etched"><div class="legend">${T('Graphics', 68)}</div><div class="panel">${svg(1610, Y(119), 671, 252,
    hl(1650, 2275, [134, 188, 243, 298, 353].map(Y)) + vl(Y(134), Y(353), [1933, 2030, 2128, 2226])
    + trace('th', tracePts)
    + [['40.00', 1932], ['120.00', 2030], ['200.00', 2128], ['280.00', 2225]].map(a => lab(a[1], Y(369), a[0], 'lt', a[0].length * 5.600, 'middle')).join(''))}</div>
  <div class="foot"><span class="n0"></span><span class="inp">0</span>${ab(1)}<span class="xm">Xmax:</span>${ab(0)}<span class="inp">800</span>${ab(1)}</div></div>`);
}

/* desktop icons */
desk.insertAdjacentHTML('beforeend', `
<svg class="ico" style="left:0;top:0" width="72" height="64" viewBox="0 0 72 64"><path d="M28 4h28l5 4v20l-5 4H28z" fill="#dcdcdc"/><rect x="29" y="7" width="24" height="17" fill="#54692c"/><path d="M32 10h15M32 13h17M32 16h13M32 20h14" stroke="#fff"/><path d="M26 32h28l8 5H20zM57 32l8-2 1 3-6 4z" fill="#ddd"/><path d="M3 28l10-4v6z" fill="#f00"/><rect x="22" y="42" width="46" height="20" fill="#777"/><text x="36" y="57" class="icl" textLength="13" lengthAdjust="spacingAndGlyphs">2k</text><path d="M8 4h18l5 5v24H8z" fill="#777"/><rect x="2" y="4" width="23" height="8" fill="#000"/><text x="4" y="11" class="pdf">PDF</text><path d="M10 30c6-4 9-10 8-18 2 8 6 11 13 13-7-1-14 0-21 5z" fill="none" stroke="#111" stroke-width="1.500"/><rect x="0" y="37" width="35" height="19" fill="#777" stroke="#aaa"/><text x="3" y="51" class="icl" textLength="31">Acrol</text></svg>
<svg class="ico" style="left:2px;top:1675px" width="60" height="36"><use href="#i-term"/></svg>
${[87, 303, 375, 447, 519, 591, 663].map(x => `<svg class="ico" style="left:${x}px;top:1670px" width="60" height="36"><use href="#i-term"/></svg>`).join('')}
<div class="load"><div>ЗС Нагрузка</div></div>`);

gw('j', './adc V5:L:KLS3:adc1', 0, '1650,244 2128,244 2129,253 2129.5,228 2130,249 2131,240 2132,246 2134,243 2138,244.500 2142,243.500 2143,244 2275,244');
gw('k', './gun V5:L:KLS3:adc2', 442, '1650,683.500 2102,683.500 2102,684.500 2112,684.500 2112,683.500 2155,683.500 2157,687 2158,683 2160,684.500 2168,683.500 2216,683.500 2216,684.500 2238,684.500 2238,683.500 2275,683.500');

adc({ cls: 'h', title: 'adc200', n: '9', u: ['0.256', '0.256'], z: ['16', '48'], thumb: 220,
  chart: svg(1399, 315, 494, 238,
    hl(1459, 1882, [335, 358, 381, 405, 428, 451, 475, 498]) + hl(1459, 1883, [346, 370], 's') + vl(335, 540, [1559, 1659, 1759, 1859]) + vl(335, 540, [1571, 1692], 'r')
    + trace('tb', '1459,356.5,1.5 1495,356.5,2.5 1550,357,1.2 1566,357 1568,365 1571,371 1575,366,1.5 1590,361,1.2 1602,359,1 1630,363,1 1660,367,.8 1710,369,.8 1714,380,1.5 1717,400 1719,409 1721,400 1724,391 1728,387,1.5 1735,381,1 1744,368 1752,367 1756,359,1.5 1784,357,1.2 1882,356.5')
    + trace('tp', '1459,381,1.5 1541,381 1543,388 1546,391,1.2 1560,388,1 1575,383,1 1610,385,1 1640,388,1 1690,390 1691,395 1692,415 1694,418 1698,412,1 1704,404,1 1715,397,1 1728,386,1.5 1735,382,1.2 1760,381,1.2 1882,380.5')
    + scale(1407, [327, 344, 373, 390, 420, 437, 467, 484], ['0.030', '0.094', '-0.096', '-0.032', '-0.224', '-0.160', '-0.352', '-0.288'])) });

/* scope window with the yellow skin */
const sp = '<svg class="sp" viewBox="0 0 19 19"><path d="M1 18V1h17" fill="none" stroke="#fff"/><path d="M1 18h17V1" fill="none" stroke="#999"/><path d="M3 3l13 13" stroke="#999"/><path d="M10 6l3-4 3 4zM3 13h6l-3 4z"/></svg>';
const nub = '<span class="nub"></span>';
const ins = (w, s) => `<span class="fi ${w}">${s}</span>`;
const op = (w, s, n = 1) => `<span class="op ${w}">${s}${n ? nub : ''}</span>`;
const ticks = Array.from({ length: 50 }, (_, i) => `<path d="M${1420.5 + i * 10} 281v${i % 10 ? (i % 5 ? 2 : 4) : 0}" stroke="#0000a8"/>`).join('');
win('framed y', 'adc200 секций 7,8,9,10', ALL, `<div class="yl">
<div class="rw first">&nbsp;–<span class="led"></span></div>
<div class="rw"><span class="nm">Numpoints</span>${ins('w43', '1024')}${sp}@&nbsp;${ins('w43', '0')}</div>
<div class="rw"><span class="nm">Timing</span>${op('o1', T('Quartz 200MHz', 96))}</div>
<div class="rw"><span class="nm">Frq. div</span>${op('o2', T('f/4 (20ns)', 61))}</div>
<div class="rw"><span class="nm">Int. Start</span>${op('o3', T('Int. Start', 51), 0)}</div>
<div class="yhr"></div>
<div class="rw k2"><span class="nm"></span><span class="vl"><span class="sq bl"></span>1</span><span class="sq rd"></span>2</div>
<div class="rw k2"><span class="nm">Scale, V</span>${op('o4', T('±0.256', 42))}${op('o4', T('±0.256', 42))}</div>
<div class="rw k2"><span class="nm">Zero</span><span class="vl">${ins('w36', '128')}${sp}</span>${ins('w36', '128')}${sp}</div>
<div class="rw k2"><span class="nm">&nbsp;1:4840</span><span class="vl blue">−0.144</span><span class="red">−0.020</span></div>
<div class="rw k2"><span class="nm">&nbsp;2:21460</span></div>
<div class="rw k2"><span class="nm">&nbsp;3:5340</span><span class="vl blue">−0.066</span><span class="red">−0.124</span></div></div>
<div class="yr">${svg(1376, 24, 584, 292,
  `<g stroke="#0000c0" stroke-dasharray="8 8" shape-rendering="crispEdges">${[88.5, 152.5, 216.5].map(y => `<path d="M1420 ${y}H1914"/>`).join('')}${[1520.5, 1620.5, 1720.5, 1820.5].map(x => `<path d="M${x} 25V281"/>`).join('')}</g>
  <path d="M1417 25.500h3.500V281.500H1914.500V25.500h4M1415 88.500h5M1415 152.500h5M1415 216.500h5M1415 280.500h5M1417 57.500h3M1417 120.500h3M1417 184.500h3M1417 248.500h3M1914 88.500h5M1914 152.500h5M1914 216.500h5M1914 280.500h5M1914 57.500h4M1914 120.500h4M1914 184.500h4M1914 248.500h4" fill="none" stroke="#000090"/>${ticks}`
  + trace('tb', '1420,155.5,1.5 1505,155.5 1508,168 1511,175 1516,168 1522,165,1.5 1530,159,1.5 1545,155,1.8 1565,157,1.5 1590,163,1.2 1605,166,1.2 1655,169.5 1657,172 1660,222 1662,223,2 1666,215 1671,200,1.5 1680,190,1.5 1685,183,1 1691,180 1695,171 1698,158,2 1730,156,1.5 1914,155.5')
  + trace('td', '1420,156,1.5 1531,157 1533,163 1535,168 1538,163,1 1545,159,1 1555,156,1.2 1600,157,1 1630,160,.8 1660,162,.5 1680,162.5 1682,170 1684,186 1686,212 1687,215 1689,205 1691,193,1 1697,183,1.5 1703,177,1.5 1716,169,1.5 1720,160 1725,157,1.2 1914,156.5')
  + `<path d="M1662.500 24V281M1687.500 24V281" stroke="#00f000"/>${lab(1665, 36, '1', 'cg')}${lab(1689, 36, '3', 'cg')}`
  + [['0.254', 34.5], ['0.128', 92.5], ['0.000', 156.5], ['-0.128', 220.5], ['-0.256', 284]].map(a => lab(1414, a[1], a[0], 'cy', a[0].length * 6, 'end') + lab(1957, a[1], a[0], 'cr', a[0].length * 6, 'end')).join('')
  + [['0', 1421], ['2000', 1520], ['4000', 1620], ['6000', 1720], ['8000', 1820], ['1(', 1910]].map(a => lab(a[1], 297, a[0], 'cy', a[0].length * 6, 'middle')).join('')
  + `<path d="M1376 300H1960V316H1376z" fill="#fae9a0"/><path d="M1420 301H1914V315H1420z" fill="#d4c585"/><path d="M1435.500 302.500H1658.500V313.500H1435.500z" fill="#fae9a0" stroke="#b5a870"/><path d="M1432 303L1422 308 1432 313zM1903 303L1912 308 1903 313z" fill="#fae9a0" stroke="#fff"/>`)}</div>`, 138);

adc({ cls: 'i', title: 'adc200 podval', tw: 85, n: '11', u: ['1.024', '0.512'], z: ['60', '86'], thumb: 220,
  chart: svg(1399, 577, 499, 236,
    hl(1459, 1888, [597, 621, 645, 669, 693, 717, 741, 765, 789]) + hl(1459, 1888, [642, 661], 's') + vl(597, 789, [1559, 1659, 1759, 1859]) + vl(597, 789, [1739, 1756], 'r')
    + trace('tp', '1459,657,1.2 1500,657,2 1515,656,4 1548,657 1550,670 1553,677 1562,672 1575,667 1590,671,2 1625,672,1.5 1688,675 1691,683 1693,713,5 1700,711,5 1707,697,5 1714,688,5 1720,684,5 1726,672,5 1735,676,5 1750,667,4 1760,662,2 1775,658,1.8 1887,657.5')
    + trace('tb', '1459,638,.9 1565,638 1568,644 1571,660 1574,666 1580,658 1590,650 1600,642 1605,640 1615,643,.7 1650,654,.7 1690,661,5 1706,661 1709,662 1712,680 1714,705 1717,724 1720,705 1724,699 1728,696,2 1735,682,3 1742,670,3 1750,662 1753,643 1755,642 1759,651,1.5 1775,645,1.2 1785,641,1 1887,639.5')
    + scale(1407, [589, 606, 637, 654, 685, 702, 733, 750, 781, 798], ['0.472', '0.340', '-0.032', '0.088', '-0.544', '-0.168', '-1.056', '-0.424', '-1.568', '-0.680'])
    + [['2051', 1558], ['4102', 1658.5], ['6153', 1758.5], ['8205', 1858.5]].map(a => lab(a[1], 809.5, a[0], 'lk', 31.5, 'middle')).join('')) });

/* klystron ADC windows */
win('framed d', './gunadc V5', ALL, `<div class="panel">${svg(410, 544, 725, 270,
  hl(430, 1125, [563, 623, 653, 683, 713, 743, 804]) + hl(430, 1125, [592, 773], 's') + vl(563, 804, [854, 954, 1054])
  + trace('tb', '774,598 776,601 782,618 788,623 793,634 801,653 811,685 818,700 826,716 835,734 842,739,.7 850,738,.7 857,736,.7 870,733,.7 879,726,.7 888,723.5 895,714 901,697 907,681 912,656 916,635 919,616 922,602 1000,590 1118,586 1124,586')
  + trace('tp', '763,773,2 812,767 822,777,1.5 840,771 847,775 848.2,719 850,770 851.500,734 853,772 855,736 857,775 860,755 862,775 870,775 871.500,745 873,772 880,773,3 888,778 890,788 893,775 895,792 898,778,3 912,777,2 935,772,2 945,780 953,776 954.500,757 957,767,1 978,772 980,759 985,770,1 1000,771 1015,769 1023,763 1030,766,1 1045,772,1 1080,770,1 1100,773 1111,778 1118,773 1124,771'))}</div>`);
adc({ cls: 'c', title: './gunadc V5:L:KLS3:adc200', u: ['1.024', '8.192'], z: ['129', '219'], thumb: 190,
  chart: svg(254, 634, 492, 196,
    hl(315, 736, [654, 672, 691, 710, 747, 766, 785, 804]) + hl(315, 736, [729, 782], 's') + vl(654, 804, [415, 515, 615, 715])
    + trace('tb', '315,730.5,1 345,731,3.5 380,731,2.500 405,731 410,731 413,740 416,743,2 445,742,1.200 475,743,.8 515,741,.6 555,740,.6 565,742.500,.6 600,745.500 604,736 608,733.500,.6 640,731.500,.8 736,731.500')
    + trace('tp', '315,785.5,.5 345,786,1 365,785.5,.4 403,785.4 404.5,735 405.3,692.7 415,691.5 440,691.5 441,692.3 554,692.3 555.5,696 557,689,2 575,691.5,1.500 598,693 600,700 601.5,710 602.5,745 605,745 608,779 611,779,1 615,787 735,787')
    + scale(264, [646, 663, 683, 700, 721, 738, 759, 776, 797, 814], ['1.024', '13.952', '0.520', '9.920', '0.008', '5.824', '-0.504', '1.728', '-1.016', '-2.368'])
    + [['2000', 414.5], ['4000', 514.5], ['6000', 614.5]].map(a => lab(a[1], 825.500, a[0], 'lk', 31.5, 'middle')).join('')) });
adc({ cls: 'b', title: './gunadc V5:L:KLS2:adc200', tw: 161, led: 1, u: ['1.024', '8.192'], z: ['128', '223'], thumb: 190,
  chart: svg(288, 347, 496, 200,
    hl(348, 775, [367, 386, 405, 424, 463, 482, 521])
    + '<path d="M348 444.500H375" class="tb"/>' + trace('tb', '365,444.5,1 372,444.5,3 378,444.5,1 390,444.5,6 415,445,5 440,445') + '<path d="M348 501.500H430" class="tp"/><path d="M350 501.500H420" class="g"/><path d="M406.500 444V430" class="tb"/>'
    + scale(297, [359, 376, 397, 414, 436, 453, 475, 492, 514, 531], ['1.016', '14.208', '0.512', '10.176', '0.000', '6.080', '-0.512', '1.984', '-1.024', '-2.112'])) });
adc({ cls: 'a', title: './gunadc V5:L:KLS1:adc200', tw: 161, led: 1, u: ['1.024', '1.024'], z: ['128', '128'], thumb: 195,
  chart: svg(386, 73, 497, 187,
    hl(446, 872, [93, 110, 128, 145, 181, 198, 216, 234]) + hl(446, 873, [163], 's') + vl(93, 234, [546, 646, 746, 846])
    + trace('tb', '446,164.500,.4 468,165,3 520,165,1 872,165')
    + trace('tp', '446,164 467,164.5,4 500,166,2.500 520,166,1 532,166 537,180 543,187 545,190 548,187,1.200 576,183,3 590,184,1.200 598,188,1 632,188.500 646,190.300 683,190.300 686,168 690,184 694,183 696,196 700,185,1.500 710,187,1 716,180 720,178 724,167 731,170 734,178 737,170,2 752,168,1 806,166.500 872,166.500')
    + scale(395, [85, 102, 120, 137, 156, 173, 191, 208, 227, 244], ['1.016', '1.016', '0.512', '0.512', '0.000', '0.000', '-0.512', '-0.512', '-1.024', '-1.024'])
    + [['2000', 545.5], ['4000', 645.5], ['6000', 745.5], ['8000', 845.5]].map(a => lab(a[1], 255.500, a[0], 'lk', 31.5, 'middle')).join('')) });

/* delay panels */
const K = [['1165.4', '600.0', '1000.0', 31, 17, 27], ['1159.7', '1000.0', '1000.0', 31, 27, 27], ['1163.1', '950.0', '1000.0', 31, 26, 27]];
win('flat e', 'kls_dly.adl', ALL, K.map((k, i) => `<div class="group"><div class="legend">${T(`Klystron ${i + 1} delays [mcs]`, 171)}</div>${[0, 1, 2].map(j =>
  `<div class="dl"><p>chan ${j * 2}<span class="cyan">${k[j]}</span></p><p><span>0.0</span><span>${k[j]}</span><span>6553.0</span></p><div class="slide"><b style="margin-left:${k[j + 3] - 2}px"></b></div></div>`).join('')}</div>`).join(''), 62);
win('flat f', 'dly.adl', ALL, `<div class="group g1"><div class="legend">${T('Tact generator', 111)}</div>
<div class="rw"><div class="btn sky">Start</div><div class="btn sky">Stop</div><span class="right cyan">ON</span></div>
<div class="rw"><div class="hz">5 Hz${nub}</div><span class="right cyan">5 Hz</span></div>
<div class="rw">${T('Status:', 52)}<span class="right white">Ok</span></div></div>
<div class="group g2"><div class="legend">${T('Delays [mcs]', 93)}</div>${[['ON', '139.45'], ['ON', '801.75'], ['ON', '732.05'], ['OFF', '3276.75']].map((r, i) =>
  `<div class="rw"><div class="btn cb">chan ${i + 1}</div><span class="st cyan">${r[0]}</span><span class="right cyan">${r[1]}</span></div>`).join('')}</div>`, 39);

/* vacuum tables */
const lamp = '<span class="lamp"></span>';
const vrow = (n, i, u, l, k) => `<div class="vr"><span>${n}</span><span class="rt">${i}</span><span class="rt">${u}</span><span></span><span class="wh">${l}</span><span></span><span class="wh">${k}</span><span></span>${lamp}<span></span>${lamp}</div>`;
const vhead = '<div class="vr hd"><span></span><span>I, μA</span><span>U, kV</span><span></span><span>Il, μA</span><span></span><span>Ul, kV</span><span></span><span>I!</span><span></span><span>U!</span></div>';
const block = s => `<div class="vb">${vhead}${s.split(';').map(r => vrow(...r.split(','))).join('')}</div>`;
const tb = (i, c = '') => `<span class="tl1 ${c}">${use(i)}</span>`;
win('flat vac t1', 'Контроль вакуума в линаках', [], `<div class="tools"></div><div class="vt">${block(
  [[5.2], [5.0], [5.1], [5.2], [5.1], [4.8], [5.2], [5.2], [5.0], [5.1], [5.1], [5.1, 1024], [4.8], [5.0], [4.3], [5.4]].map(a => `,,${a[0].toFixed(1)},${a[1] || 256},2.0`).join(';'))}${block(
  '9S8OUT,0.7,5.1;9LOS8,0.0,4.6;9S9IN,1.8,4.9;9S9OUT,2.2,3.9;10LOS9,1.6,4.5;10S10IN,1.3,5.4;10S10OUT,0.8,5.2;10LOS10,0.0,0.0;11WG4,0.0,5.7;11S11IN,0.3,5.5;11S11OUT,0.6,5.6;11LOS11,0.0,4.8;12S12IN,0.4,5.3;12S12OUT,0.2,5.0;12LOS12,0.0,5.1;12S13IN,0.3,5.3'.split(';').map(r => r + ',256,2.0').join(';'))}${block(
  ['13', '13', '13', '14', '14', '14', '14', '15', '15', '15', '15', '15', '16', '16', '16', '16'].map(n => n + ',0.0,0.0,0,0.0').join(';'))}</div>`, 179);
win('flat vac s1', 'Контроль вакуума в кольце', ['min', 'dot'], `<div class="tools">${tb('i-folder')}${tb('i-floppy')}<hr>${tb('i-doc')}<hr>${tb('i-bars')}${tb('i-log', 'on')}<span class="led"></span>${tb('i-help', 'q')}${tb('i-door', 'end')}</div>
<div class="vt">${block('1D1,3.4,5.0,256,2.0;1D2,19.2,4.8,256,2.0;1D3,29.9,4.4,256,2.0;1D4,101.2,5.2,256,2.0;2D1,0.0,5.4,1024,2.0;2D2,682.5,5.0,1024,2.0;2D3,23.2,5.1,256,2.0;2D4,44.6,5.9,512,2.0;3D1,203.9,5.2,256,2.0;3D2,16.0,5.2,256,2.0;3D3,1.4,5.2,256,2.0;3D4,3.2,5.0,256,2.0;4D1,15.1,5.1,256,2.0;4D2,263.0,5.0,1024,2.0;4D3,0.1,7.0,2560,2.0;4D4,0.0,5.4,256,2.0')}${block(
  '5D1,1.8,4.9,256,2.0;5D2,2.0,5.2,256,2.0;5D3,10.0,5.2,256,2.0;5D4,135.0,5.1,256,2.0;6D1,0.0,0.0,256,0.0;6D2,0.0,0.0,256,0.0;6D3,0.0,0.0,256,0.0;6D4,0.0,0.0,256,0.0;7D1,19.7,5.1,256,2.0;7D2,17.4,4.4,256,2.0;7D3,0.7,5.9,256,2.0;7D4,48.9,3.9,256,2.0;8D1,489.6,5.3,700,2.0;8D2,0.0,4.4,256,2.0;8D3,0.1,4.3,256,2.0;8D4,0.0,4.1,256,2.0')}</div>`, 173);

/* subharmonic panel */
function dial(needle) {
  let t = '';
  for (let k = 0; k <= 20; k++) {
    const a = (k * 15 - 150) * Math.PI / 180, r = k % 10 ? 44.500 : 39;
    t += `<path d="M${(Math.sin(a) * r).toFixed(1)} ${(-Math.cos(a) * r).toFixed(1)}L${(Math.sin(a) * 48).toFixed(1)} ${(-Math.cos(a) * 48).toFixed(1)}" stroke="#000"/>`;
  }
  return `<svg class="dial" viewBox="-50 -49.500 100 102"><circle r="48.500" fill="#fff"/>${t}<path d="${needle}"/></svg>`;
}
const sp2 = s => `<div class="sp2"><span class="wh">${s}</span>${sp}</div>`;
const da = s => `<div class="da"><span>◂</span><span>${s}</span><span>▸</span></div>`;
win('flat vac u', 'Управление субгармоникой', ['min', 'dot'], `<div class="tools">${tb('i-folder')}${tb('i-floppy')}<hr>${tb('i-doc')}${tb('i-elog')}<span class="led"></span>${tb('i-help', 'q')}${tb('i-door', 'end')}</div>
<div class="ug"><span></span><span class="c">1</span><span class="c">2</span>
<span class="top">${T('Грубо', 35)}</span>${dial('M-12.500 -7.800L-3.700 -14 25 31z')}${dial('M2.200 -14L11 -9.300 -20 33z')}
<span></span>${da('350°')}${da('0°')}
<span>Фаза</span>${sp2('0.000')}${sp2('0.000')}
<span>1111</span><span class="c v1">0.147°</span><span class="c v2">−0.868°</span>
<span>${T('U рез.', 37)}</span>${sp2('0.000')}${sp2('−0.000')}
<span>2222</span><span class="c v1">0.045°</span><span class="c v1">0.031°</span></div>
<div class="ust">${T('Режим считан из файла "mode_subharmonic_20090403_', 288)}</div>`, 169);

/* application starter */
const cx = n => `<div class="cxb">${n}</div>`;
win('flat v', 'CX-starter', [], `<div class="nm"><span>Name</span><span>?</span></div>${['beamctl', 'linvac', 'ringvac', 'subharmonic', 'wavesel', 'adc200_78910'].map(cx).join('')}<div class="ln"></div>${['syn', 'phr', 'kls', 'kls1_adc200', 'kls2_adc200', 'kls3_adc200', 'F4226_1', 'F4226_2'].map(cx).join('')}<div class="qb">?</div>`);

/* power supply */
const L = use('i-left', 'ar'), R = use('i-right', 'ar');
const cinp = s => `<span class="inp cond">${s}</span>`, cout = s => `<span class="out cond">${s}</span>`;
const kr = (n, a, b) => `<div class="kr"><span class="tag">${n}</span><span></span>${L}<span></span>${cinp(a)}<span></span>${R}<span></span>${cout(b)}</div>`;
const mod = (i, v, on) => `<div class="group"><div class="legend sans">${T('Модулятор клистрона ' + i, 160)}</div>${kr('высокое', v[0], v[1])}${kr('мощность', v[2], v[3])}${kr('уровень', v[4], v[5])}
<div class="gap"></div><div class="line sans">${T('Стабилизация мощности ВЧ', 193)}${chk(0, 0)}</div><div class="line sans">${T('Медленная защита', 130)}<span class="ring"></span></div><div class="line sans">${T('Быстрая защита', 112)}<span class="ring"></span></div><div class="line sans">${T('Звуковая сигнализация', 160)}${chk(1, on)}</div></div>`;
const mb = (l, r) => `<div class="menubar">${l.map(s => `<span><u>${s[0]}</u>${s.slice(1)}</span>`).join('')}${r ? `<span class="end"><u>${r[0]}</u>${r.slice(1)}</span>` : ''}</div>`;
const pair = (a, b, c = '') => `<div class="pair ${c}"><div class="btn">${a}</div><div class="btn">${b}</div></div>`;
win('framed o', 'Klystron Power Supply System', ALL, mb(['File', 'View', 'Options'], 'Help') + `<div class="head">${T('Система питания клистронов', 196)}</div>`
  + mod(1, ['45900', '45900', '5.400', '5.400', '0', '-142'], 1) + mod(2, ['44700', '44700', '8.710', '8.710', '0', '3736'], 1) + mod(3, ['46900', '46900', '9.800', '9.800', '10', '3700'], 0)
  + pair('Update', 'Exit') + `<div class="status">${T('V5:L:KLS2:HvC: errors total 0, disconnectio', 243)}</div>`, 186);

/* synchronization */
const sq = c => `<span class="sq ${c || ''}"></span>`;
const fr = (n, s, v) => `<div class="fr"><span class="tag">${n}</span><span></span><span class="tag fo">${s}<span class="nub tl"></span></span><span></span><span class="cond">${v}</span>${sq()}${sq('off')}</div>`;
const S = [['Субгармоника', 0, '3.115', '3.114', 'мс'], ['Модуляторы', 0, '2.118', '2.118', 'мс'], ['Линак', 0, '2.171', '2.170', 'мс'], ['ЭП и диагн.', 1, '1107.530', '1107.530', 'мкс'], ['ЭП высок.', 2, '10965.88', '10965.92', 'нс'], ['ЭП сетка', 2, '12131.90', '12132.02', 'нс'], ['ADC-200', 2, '6966.00', '6965.95', 'нс'], ['Канал 1-4', 2, '9969.00', '9968.90', 'нс'], ['ВРМ', 2, '12338.90', '12338.88', 'нс'], ['ИПП', 2, '12972.11', '12972.14', 'нс'], ['Канал 1-7', 2, '7268.93', '7268.96', 'нс'], ['Канал 1-8', 2, '10368.97', '10368.88', 'нс'], ['ВЧ линака', 1, '1098.240', '1098.240', 'мкс'], ['Впуск-вып.', 1, '21.000', '21.000', 'мкс'], ['Линак-4', 1, '0.001', '0.001', 'мкс'], ['Пучк. датчик', 0, '1.390', '1.389', 'мс'], ['ПП пучка', 1, '1899.000', '1899.000', 'мкс'], ['ПД камера', 1, '0.000', '0.000', 'мкс'], ['Пучк. датч.', 1, '0.139', '0.139', 'мкс'], ['Канал ПД-4', 1, '800.000', '800.000', 'мкс']];
let branches = '';
const cy = i => i * 26 + 13.5;
const vseg = (x, i, end) => `<path d="M${x}.5 ${cy(i) - 11}V${cy(i) + (end ? 0 : 11)}"/>`;
for (let i = 3; i < 20; i++) {
  if (i === 15) continue;
  branches += vseg(10, i, i === 14 || i === 19);
  if (S[i][1] === 2) branches += vseg(29, i, i === 11) + `<path d="M29 ${cy(i)}h28"/>`;
  else branches += `<path d="M10 ${cy(i)}h${i === 3 || i === 12 ? 10 : 28}"/>`;
}
[[4, 2], [4, 15], [23, 3], [23, 12]].forEach(([x, i]) => branches += `<rect x="${x}.5" y="${cy(i) - 6}" width="12" height="12"/><path d="M${x + 3} ${cy(i)}h7${i === 12 ? `M${x + 6.5} ${cy(i) - 3}v7` : ''}"/>`);
win('framed active p', 'Synchronization System Control', ALL, mb(['File', 'Options']) + `<div class="head">${T('Управление системой синхронизации комплекса', 321)}</div>
<div class="group g1"><div class="legend sans">${T('Режим работы', 100)}</div><div class="radio sans"><div><p>${sq()}${T('старт', 37)}</p><p>${sq('off')}${T('стоп', 30)}</p></div><span class="led"></span></div></div>
<div class="group g2"><div class="legend sans">${T('Частоты запусков', 124)}</div><div class="inner"><svg class="tree" width="23" height="78"><path d="M19 13.500H5.500V36.500H19M19 42.500H10.500V65.500H19"/></svg><div>${fr('Модуляторы', '10 Гц', '10.00 Гц')}${fr('Линак', '5 Гц', '5.00 Гц')}${fr('Пучк. датчик', '1-й', '1')}</div></div>${pair('Update', 'Modify')}</div>
<div class="mid sans">${T('Задержки и маски запусков', 190)}</div>
<div class="group g3"><svg class="tree" width="23" height="520">${branches}</svg><div>${S.map((r, i) => `<div class="sr"><span class="tag l${r[1]}">${r[0]}</span>${L}<span></span>${cinp(r[2])}<span></span>${R}<span></span>${cout(r[3])}<span class="un sans">${r[4]}</span><span></span>${sq(i === 11 ? 'off' : '')}${sq(i === 11 ? 'hot' : 'off')}</div>`).join('')}</div></div>
${pair('Update', 'Exit', 'ft')}<div class="status">${T('V5:SYN:MaskC.B4: errors total 4, disconnections 4', 285)}</div>`, 191);

/* load meter and desktop pager */
const skyline = 'M0 50V6L2 3 4 5 6 1 9 4 11 3 13 6 16 4 18 7 21 5 23 8 26 7 28 10 31 11 33 13 35 14 38 17 41 16 44 15 48 16V50z';
desk.insertAdjacentHTML('beforeend', `<svg class="pg" viewBox="0 0 150 50"><rect width="49" height="50" fill="#999"/><path d="${skyline}" transform="translate(1 0)"/><rect x="49" width="101" height="50" fill="#8a8a8a"/><path d="M49.500 0V50M49 49.500H150M50 .500H150" stroke="#ccc"/><rect x="51" y="2" width="48" height="15" fill="#c9b1cb"/><path d="M51 17.500H148M99.500 2V48" stroke="#000"/><path d="M51 27.500H148M51 37.500H148" stroke="#111" stroke-dasharray="4 3"/><path d="M67.500 18V48M83.500 18V48M115.500 18V48M131.500 18V48" stroke="#111" stroke-dasharray="4 12"/><path d="M52 18h12v6H52zM55 20h12v8H55zM64 18h8v5h-8zM60 24h8v9h-8zM52 27h6v9h-6zM53 37h5v7h-5zM63 35h5v3h-5zM76 22h7v2h-7zM53 22h10M56 26h8" fill="none" stroke="#111" stroke-width="1.300"/><rect x="57" y="21" width="3" height="5" fill="#0cc"/><text x="61" y="14.500" class="pgt" textLength="28">Desk</text><text x="109" y="14.500" class="pgt" textLength="29">Apps</text></svg>`);

/* beam monitor */
win('framed z', 'Electron Beam  Charge Distribution  Monitor  N 1', ALL, mb(['File', 'Edit', 'View', 'Options'], 'Help'), 287);

/* interlock lists */
const blk = (cls, title, h1, w1, h2, w2, items, btns) => win('framed blk ' + cls, title, btns, `<div class="top">${use('i-warn')}<p>${T(h1, w1)}<br>${T(h2, w2)}</p></div><ul>${items.split(';').map(s => `<li><span class="ring"></span>${s}</li>`).join('')}</ul><div class="bot"><div class="btn">OK</div><div class="rs"><div class="btn">Reset</div></div></div>`, 112);
blk('n', 'Slow blocking state', 'Клистрон 1:  блокировки ББС', 194, '(медленные сигналы)', 143, 'вода тиратрона;вода модулятора;вода клистрона и имп. трансф.;вода нагрузки клистрона;вакуум клистрона;клаксон;фокусирующий магнит;готовность накала тиратрона;готовность накала клистрона;штанги, РМБ, двери;готовность ЛУ;блок быстрой защиты', ['menu']);
blk('m', 'Fast blocking state', 'Клистрон 2:  блокировки ББЗ', 193, '(быстрые сигналы)', 126, 'ток сети;перенапряжение выпрямителя U25;токовое реле;перенапряжение форм. линии U50;превышение тока заряда линии;3−х кратное превыш. тока заряда линии;превышение тока клипперного диода;превышение тока стабилизации;превышение тока тиратрона;асимметрия токов тиратронов;превышение напряжения клистрона U2;блок термоконтроля;превышение тока клистрона I2;укорочение импульса пад. СВЧ мощности;превышение допуст. отр. СВЧ мощности;вакуум фидера;первеанс;ток соленоида;ток размагничивания;автоземлитель', ['menu']);

/* RF phase and stepper motors */
const wr = (n, a, b) => `<div class="wr"><span class="tag">${n}</span><span></span>${L}<span></span>${cinp(a)}<span></span>${R}<span></span>${cout(b)}</div>`;
win('framed w', 'RF Phase and Frequency Control', ALL, mb(['File', 'Options'], 'Help') + `<div class="head">${T('Управление фазами и частотой', 207)}</div>
<div class="group g1"><div class="legend sans">${T('Фазовращатели  [град.]', 159)}</div>${wr('фаза 1', '7.80', '7.80')}${wr('фаза 2', '91.80', '91.81')}${wr('фаза 3', '79.20', '79.20')}${wr('фаза 4', '0.00', '0.00')}</div>
<div class="group g2"><div class="legend sans">${T('Частота генератора  [кГц]', 174)}</div>${wr('частота', '356868.7', '356868.7')}</div>
${pair('Update', 'Exit')}<div class="status">${T('V5:PHR:Phase3C: errors total 0, disconnections 0', 276)}</div>`, 192);
const bold = r => `<span class="tag ib"><svg width="14" height="13" viewBox="0 0 14 13"><path d="${r ? 'M14 6.500L7 0v4H0v5h7v4z' : 'M0 6.500L7 0v4h7v5H7v4z'}"/></svg></span>`;
win('framed x', 'smc/smc podval', ALL, `<div class="head">${T('Stepper Motors Control', 165)}</div><div class="group">${[['group A', '1000'], ['group F', '5000'], ['sm 3', '0'], ['sm 4', '0'], ['sm 5', '0']].map(r =>
  `<div class="xr"><span class="tag">${r[0]}</span><span></span>${bold(0)}<span></span>${cinp(r[1])}<span></span>${bold(1)}<span></span>${cout('0')}<span></span><span class="tag ib"><svg width="22" height="17"><use href="#i-stop"/></svg></span></div>`).join('')}</div>
${pair('Reload', 'Exit')}<div class="status">${T('group A  moved 1000:  OK', 142)}</div>`, 97);

desk.insertAdjacentHTML('beforeend', '<div class="lat">LAT</div>');

/* spread letters so that each marked string takes its nominal width */
document.querySelectorAll('.t[data-w]').forEach(el => {
  el.style.letterSpacing = ((el.dataset.w - el.getBoundingClientRect().width) / el.textContent.length).toFixed(3) + 'px';
});
```
